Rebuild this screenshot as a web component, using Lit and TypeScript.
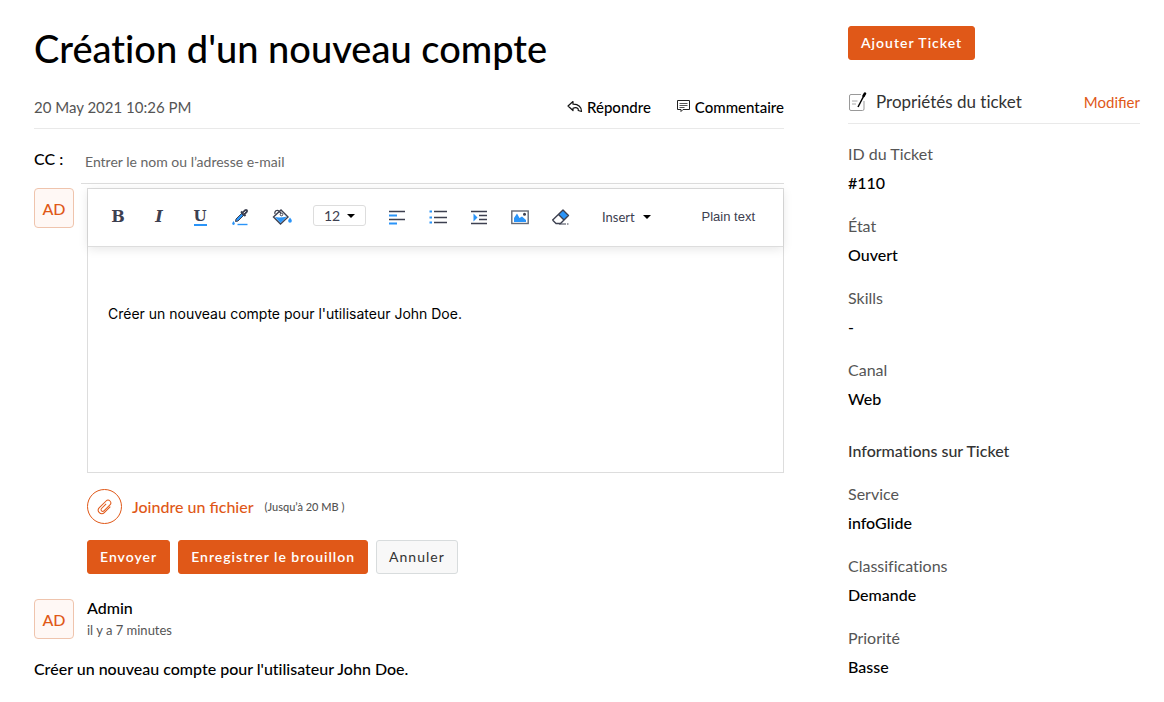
import { LitElement, html, css, svg } from "lit";
import { customElement, property } from "lit/decorators.js";

const INK = "#3d4050";
const BLUE = "#2a94f8";

const icons = {
  reply: svg`<path d="M6 1.500 1 6 6 10.500V8.200C8 7.400 10 7.600 11.200 8.800V10.500L14.500 11.500C14.800 7.500 11.500 4 6 4.200Z" fill="none" stroke="#111" stroke-width="1.200" stroke-linejoin="round"/>`,
  comment: svg`<path d="M.5 .5H12.500V9.500H6L4 11.500V9.500H.5Z" fill="none" stroke="#222"/><path d="M2.500 3.500H10.500M2.500 5.500H10.500M2.500 7.500H7.500" stroke="#555"/>`,
  dropper: svg`<path d="M5 12 11.500 5.500 13.500 7.500 7 14 4.500 14.500Z" fill="${BLUE}" stroke="${INK}"/><path d="M10 4.500 14.500 9" stroke="${INK}" stroke-width="2"/><path d="M12.500 6.500 15 4" stroke="${INK}" stroke-width="4" stroke-linecap="round"/><path d="M12.700 6.200 14.700 4.200" stroke="#fff" stroke-width="1"/><path d="M2.500 14Q4.200 16.300 3.800 17.100A1.600 1.600 0 0 1 1.200 17.100Q.8 16.300 2.500 14Z" fill="${BLUE}"/><path d="M6.500 17.500H16.500" stroke="${BLUE}" stroke-width="1.400"/>`,
  bucket: svg`<path d="M2 9.500 9 3 16 10 8.500 17 1.500 10Z" fill="#fff" stroke="${INK}" stroke-width="1.400"/><path d="M3 10Q8 11 15 9.500L8.500 16Z" fill="${BLUE}"/><path d="M3 7C2 4 5 2.500 7 4L9.500 7" fill="none" stroke="${INK}" stroke-width="1.300"/><circle cx="9.500" cy="7.500" r="1.300" fill="#fff" stroke="${INK}"/><path d="M18 10.500Q20 13 19.800 14A1.800 1.800 0 0 1 16.200 14Q16 13 18 10.500Z" fill="${BLUE}"/>`,
  align: svg`<path d="M2 4.500H18M2 12.500H18" stroke="${INK}" stroke-width="1.400"/><path d="M2 8.500H10M2 16.500H10" stroke="${BLUE}" stroke-width="1.800"/>`,
  list: svg`<path d="M6 4.500H19M6 10.500H19M6 15.500H19" stroke="${INK}" stroke-width="1.400"/><path d="M1.500 4.500H4M1.500 10.500H4M1.500 15.500H4" stroke="${BLUE}" stroke-width="2.200"/>`,
  indent: svg`<path d="M2 4.500H18M10 8.500H18M10 12.500H18M2 16.500H18" stroke="${INK}" stroke-width="1.400"/><path d="M4.500 6.500V14.500L8.500 10.500Z" fill="${BLUE}"/>`,
  image: svg`<rect x="1.800" y="4" width="16.400" height="12.500" fill="#fff" stroke="#656a76" stroke-width="1.400"/><path d="M4 15V11L7 6.500 9.500 11 12 9.500 16 13V15Z" fill="${BLUE}"/><circle cx="14.500" cy="7.200" r="1.500" fill="${INK}"/>`,
  eraser: svg`<path d="M7.500 7.500 12 3 17.500 8.500 13 13Z" fill="${BLUE}"/><path d="M12 3 17.500 8.500 9.500 16.500H5L2 13.500Q1.500 12.500 2.200 12.500ZM7.500 7.500 13 13" fill="none" stroke="${INK}" stroke-width="1.400" stroke-linejoin="round"/><path d="M8 17H15M16 17H17.500" stroke="${INK}" stroke-width="1.200"/>`,
  clip: svg`<g transform="rotate(45 9 9)" fill="none" stroke="#e05818"><path d="M12.500 5V13.500A3.500 3.500 0 0 1 5.500 13.500V4A2.700 2.700 0 0 1 11 4V12.500A1.700 1.700 0 0 1 7.600 12.500V6"/></g>`,
  note: svg`<path d="M13 2.500H3Q1.500 2.500 1.500 4V17Q1.500 18.500 3 18.500H14.500Q16 18.500 16 17V9" fill="none" stroke="#999"/><path d="M4 9H9.500M4 12H8" stroke="#aaa"/><path d="M10 15 16 3.500" stroke="#000" stroke-width="1.500"/><path d="M15.500 4 17 1.500" stroke="#000" stroke-width="2.500" stroke-linecap="round"/>`,
};

const caret = svg`<path d="M0 0H8L4 4Z" fill="#000"/>`;

@customElement("user-avatar")
class UserAvatar extends LitElement {
  @property() initials = "";
  static styles = css`
    :host {
      flex: none;
      display: grid;
      place-items: center;
      box-sizing: border-box;
      width: 40px;
      height: 40px;
      padding-top: 2px;
      border: 1px solid #efc4ad;
      border-radius: 4px;
      background: #fff8f5;
      color: #e05818;
      font-size: 16px;
      line-height: 20px;
      font-weight: 500;
    }
  `;
  render() {
    return html`<span>${this.initials}</span>`;
  }
}

@customElement("app-root")
class AppRoot extends LitElement {
  static styles = css`
    :host {
      display: block;
      color: #000;
      font-family: Lato, "Open Sans", sans-serif;
      font-size: 16px;
      line-height: 20px;
      font-weight: 500;
    }
    * { box-sizing: border-box; }
    button, input, select, textarea { font: inherit; color: inherit; margin: 0; }
    button { padding: 0; border: 0; background: none; cursor: pointer; }
    svg { display: block; flex: none; }
    .page {
      display: grid;
      grid-template-columns: minmax(0, 1fr) 292px;
      column-gap: 64px;
      padding: 26px 24px 20px 34px;
    }
    h1 { margin: 0; font-size: 38px; line-height: 44px; font-weight: 500; }
    h1, h2, h3, dl, .message { font-variant-ligatures: none; }
    .meta {
      display: flex;
      align-items: center;
      gap: 26px;
      margin-top: 16px;
      height: 43px;
      padding-bottom: 1px;
      border-bottom: 1px solid #e9e9e9;
      font-size: 15px;
    }
    .date { flex: 1; color: #555; font-weight: 400; }
    .action { display: flex; align-items: center; gap: 4px; }
    .cc { display: flex; align-items: center; height: 55px; gap: 17px; }
    .cc label { width: 30px; padding-top: 4px; }
    .cc input {
      flex: 1;
      min-width: 0;
      height: 55px;
      padding: 10px 4px 0;
      border: 0;
      border-bottom: 1px solid #ddd;
      outline: 0;
      font-size: 14px;
      font-weight: 400;
    }
    .cc input::placeholder { color: #666; opacity: 1; }
    .compose { display: flex; gap: 13px; margin-top: 4px; }
    .body { flex: 1; min-width: 0; }
    .editor { border: 1px solid #ddd; }
    .toolbar {
      display: flex;
      align-items: center;
      gap: 21px;
      height: 58px;
      padding: 0 28px 2px 20px;
      border-bottom: 1px solid #ddd;
      box-shadow: 0 2px 10px #0000001a;
      color: #3d4050;
      font-size: 14px;
      font-weight: 400;
    }
    .tool { width: 20px; height: 20px; display: grid; place-items: center; }
    .glyph { font: bold 16px/20px "DejaVu Serif", serif; }
    .italic { font-style: italic; }
    .under { line-height: 16px; height: 18px; border-bottom: 2px solid #2a94f8; width: 13px; display: grid; place-items: center; font-size: 15px; }
    .size { position: relative; display: flex; align-items: center; padding-bottom: 2px; }
    .size select {
      width: 53px;
      height: 21px;
      padding: 0 0 0 10px;
      border: 1px solid #ddd;
      border-radius: 3px;
      background: #fff;
      appearance: none;
      line-height: 19px;
    }
    .size svg { position: absolute; right: 11px; pointer-events: none; }
    .insert { display: flex; align-items: center; gap: 8px; margin-left: 10px; font-size: 13px; }
    .plain { margin-left: auto; font-family: "Liberation Sans", sans-serif; font-size: 13px; }
    textarea {
      display: block;
      width: 100%;
      height: 225px;
      padding: 57px 20px 20px;
      border: 0;
      outline: 0;
      resize: none;
      background: transparent;
      font-family: Inter, "Liberation Sans", sans-serif;
      font-size: 14px;
      font-weight: 400;
    }
    .attach { display: flex; align-items: center; gap: 11px; margin-top: 16px; }
    .attach button { display: flex; align-items: center; gap: 10px; color: #e05818; font-size: 16px; line-height: 18px; }
    .ring { width: 35px; height: 35px; border: 1px solid #e05818; border-radius: 50%; display: grid; place-items: center; }
    .limit { color: #555; font-size: 11px; font-weight: 500; }
    .buttons { display: flex; gap: 8px; margin-top: 16px; }
    .btn {
      height: 34px;
      padding: 0 12px;
      border: 1px solid #e05818;
      border-radius: 3px;
      background: #e05818;
      color: #fff;
      font-size: 14px;
      font-weight: 600;
      letter-spacing: 1px;
    }
    .btn.quiet { border-color: #d8dcdd; background: #f8f8f8; color: #333; font-weight: 400; }
    .entry { display: flex; gap: 13px; margin-top: 25px; }
    .who { line-height: 18px; }
    .ago { color: #555; font-size: 13px; font-weight: 400; line-height: 26px; }
    .message { margin: 16px 0 0; }
    .side-head {
      display: flex;
      align-items: center;
      gap: 8px;
      height: 43px;
      margin-top: 21px;
      border-bottom: 1px solid #e9e9e9;
    }
    h2, h3 { margin: 0; color: #333; font-size: 16px; font-weight: 500; }
    h2 { flex: 1; font-size: 17px; font-weight: 400; }
    a { color: #e05818; text-decoration: none; font-size: 15px; font-weight: 400; }
    dl { margin: 20px 0 0; }
    dt { color: #555; font-weight: 400; }
    dd { margin: 9px 0 23px; }
    h3 + dl { margin-top: 23px; }
    h3 { margin-top: 32px; }
  `;

  private fields = [["ID du Ticket", "#110"], ["État", "Ouvert"], ["Skills", "-"], ["Canal", "Web"]];
  private info = [["Service", "infoGlide"], ["Classifications", "Demande"], ["Priorité", "Basse"]];

  private tool(label: string, icon: unknown) {
    return html`<button class="tool" aria-label=${label}><svg width="20" height="20" viewBox="0 0 20 20">${icon}</svg></button>`;
  }
  private list(rows: string[][]) {
    return html`<dl>${rows.map(([k, v]) => html`<dt>${k}</dt><dd>${v}</dd>`)}</dl>`;
  }

  render() {
    return html`
      <div class="page">
        <main>
          <h1>Création d'un nouveau compte</h1>
          <div class="meta">
            <span class="date">20 May 2021 10:26 PM</span>
            <button class="action"><svg width="16" height="13" viewBox="0 0 16 13">${icons.reply}</svg>Répondre</button>
            <button class="action"><svg width="14" height="13" viewBox="0 0 14 13">${icons.comment}</svg>Commentaire</button>
          </div>
          <div class="cc">
            <label for="cc">CC :</label>
            <input id="cc" type="text" placeholder="Entrer le nom ou l’adresse e-mail" />
          </div>
          <div class="compose">
            <user-avatar initials="AD"></user-avatar>
            <div class="body">
              <div class="editor">
                <div class="toolbar">
                  <button class="tool" aria-label="Gras"><span class="glyph">B</span></button>
                  <button class="tool" aria-label="Italique"><span class="glyph italic">I</span></button>
                  <button class="tool" aria-label="Souligné"><span class="glyph under">U</span></button>
                  ${this.tool("Couleur du texte", icons.dropper)}
                  ${this.tool("Couleur de fond", icons.bucket)}
                  <span class="size">
                    <select aria-label="Taille"><option>12</option></select>
                    <svg width="8" height="4" viewBox="0 0 8 4">${caret}</svg>
                  </span>
                  ${this.tool("Aligner", icons.align)}
                  ${this.tool("Liste", icons.list)}
                  ${this.tool("Retrait", icons.indent)}
                  ${this.tool("Image", icons.image)}
                  ${this.tool("Effacer", icons.eraser)}
                  <button class="insert">Insert<svg width="8" height="4" viewBox="0 0 8 4">${caret}</svg></button>
                  <button class="plain">Plain text</button>
                </div>
                <textarea aria-label="Message" .value=${"Créer un nouveau compte pour l'utilisateur John Doe."}></textarea>
              </div>
              <div class="attach">
                <button><span class="ring"><svg width="18" height="18" viewBox="0 0 18 18">${icons.clip}</svg></span>Joindre un fichier</button>
                <span class="limit">(Jusqu’à 20 MB )</span>
              </div>
              <div class="buttons">
                <button class="btn">Envoyer</button>
                <button class="btn">Enregistrer le brouillon</button>
                <button class="btn quiet">Annuler</button>
              </div>
            </div>
          </div>
          <div class="entry">
            <user-avatar initials="AD"></user-avatar>
            <div><div class="who">Admin</div><div class="ago">il y a 7 minutes</div></div>
          </div>
          <p class="message">Créer un nouveau compte pour l'utilisateur John Doe.</p>
        </main>
        <aside>
          <button class="btn">Ajouter Ticket</button>
          <div class="side-head">
            <svg width="20" height="20" viewBox="0 0 20 20">${icons.note}</svg>
            <h2>Propriétés du ticket</h2>
            <a href="#">Modifier</a>
          </div>
          ${this.list(this.fields)}
          <h3>Informations sur Ticket</h3>
          ${this.list(this.info)}
        </aside>
      </div>
    `;
  }
}
